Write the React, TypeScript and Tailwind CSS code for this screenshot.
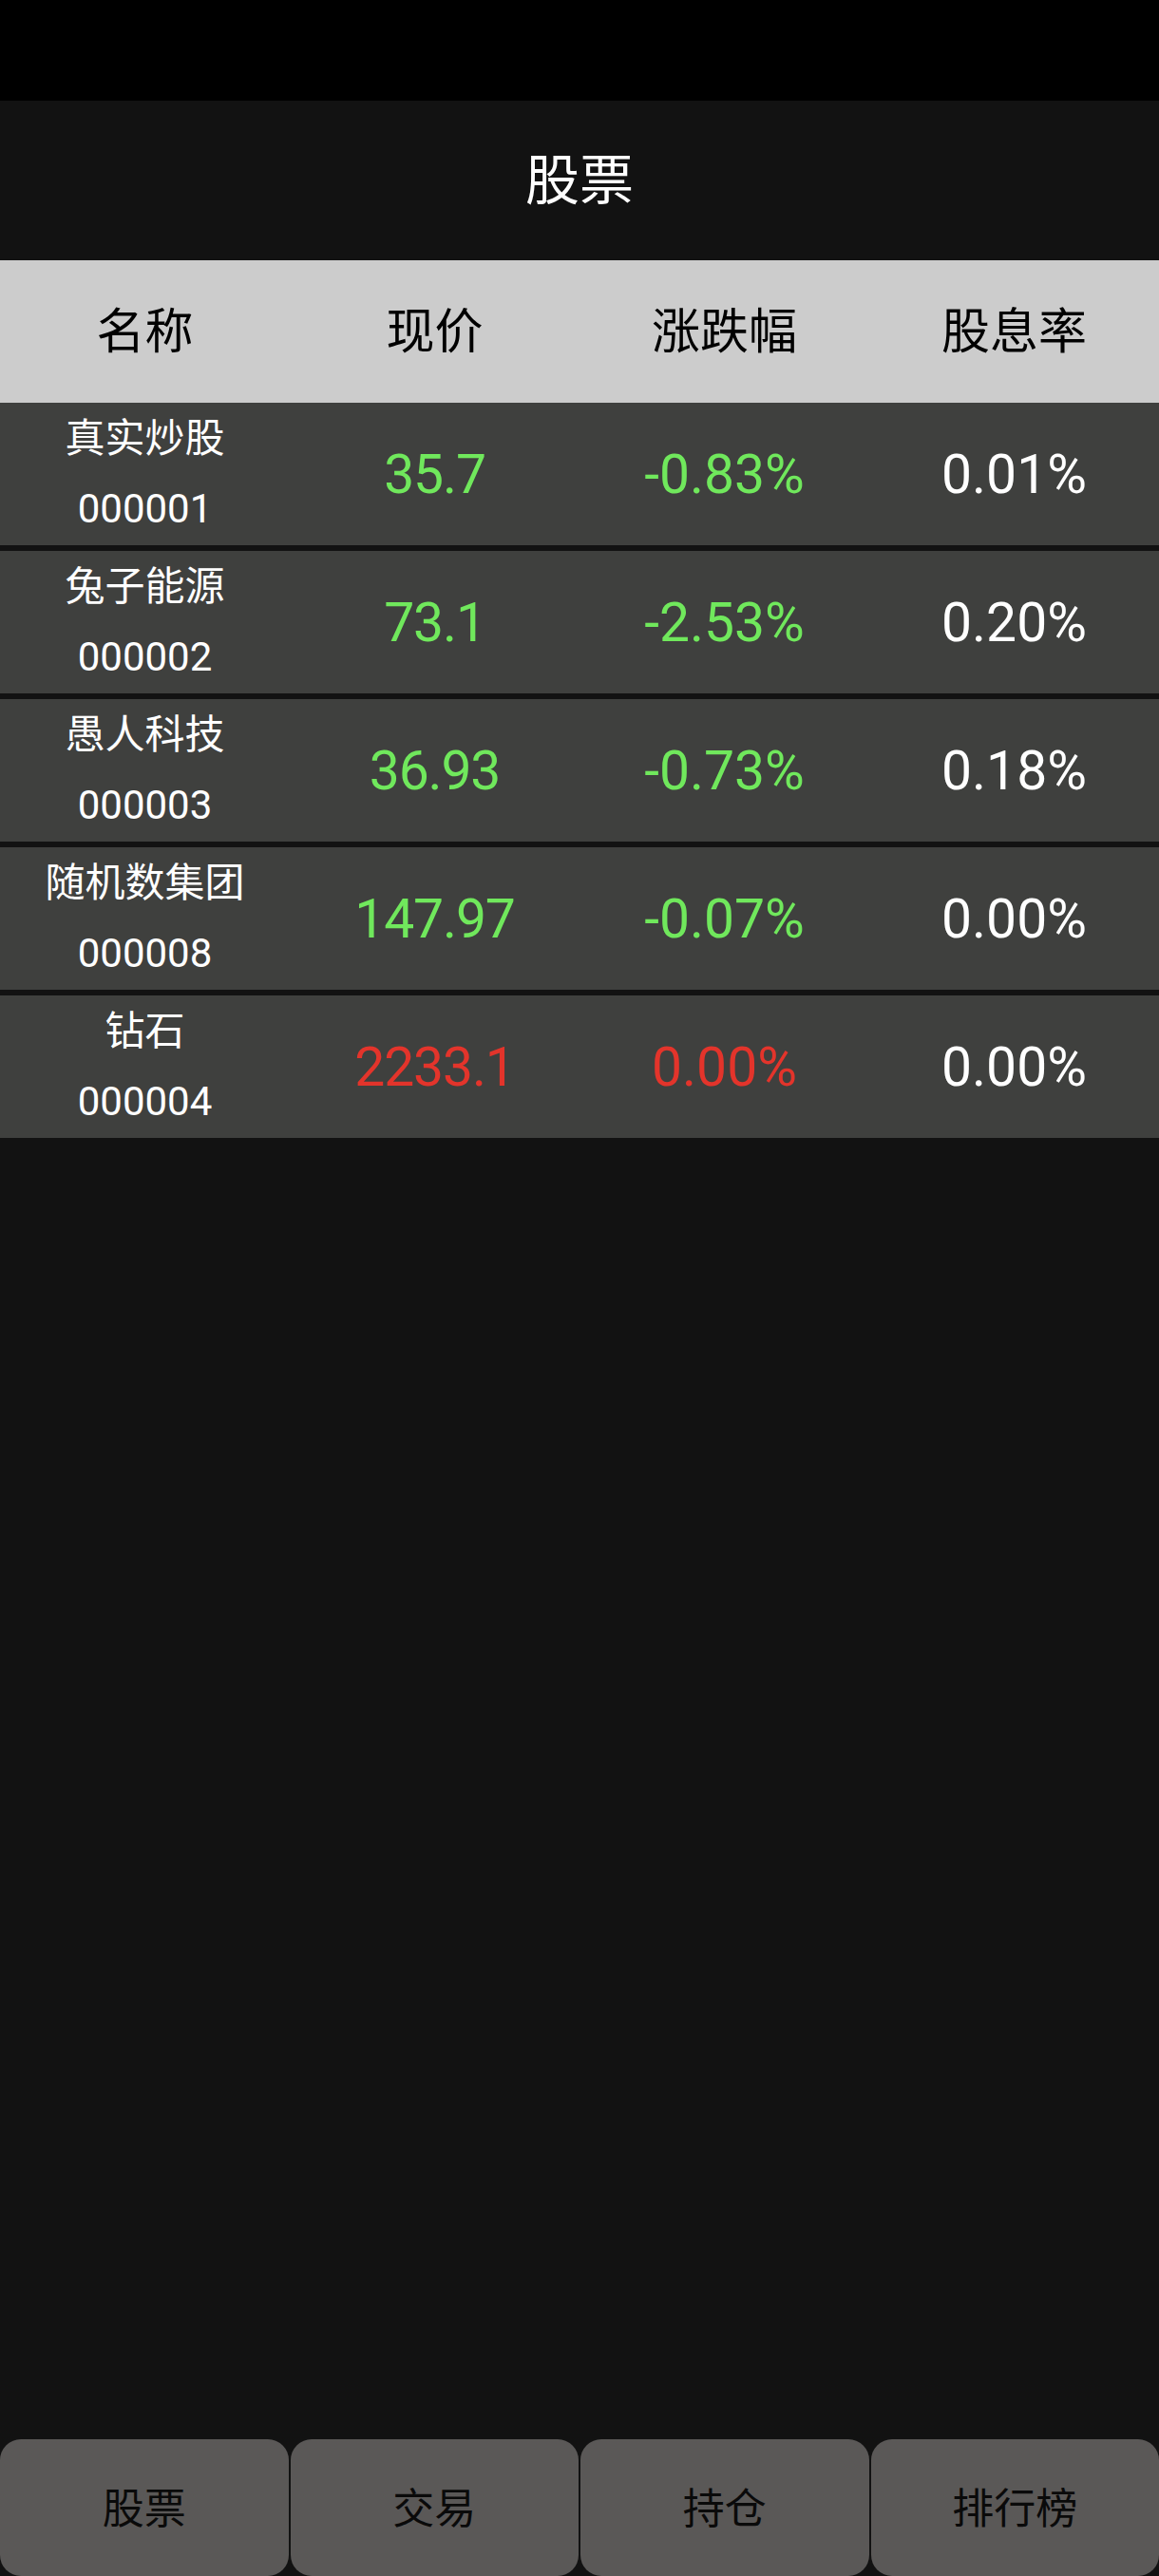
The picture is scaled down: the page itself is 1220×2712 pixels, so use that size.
import React from "react";

type Stock = {
  name: string;
  code: string;
  price: string;
  change: string;
  rate: string;
  up: boolean;
};

const stocks: Stock[] = [
  { name: "真实炒股", code: "000001", price: "35.7", change: "-0.83%", rate: "0.01%", up: false },
  { name: "兔子能源", code: "000002", price: "73.1", change: "-2.53%", rate: "0.20%", up: false },
  { name: "愚人科技", code: "000003", price: "36.93", change: "-0.73%", rate: "0.18%", up: false },
  { name: "随机数集团", code: "000008", price: "147.97", change: "-0.07%", rate: "0.00%", up: false },
  { name: "钻石", code: "000004", price: "2233.1", change: "0.00%", rate: "0.00%", up: true },
];

const tabs = ["股票", "交易", "持仓", "排行榜"];

export default function App() {
  return (
    <div className="flex h-[2712px] w-[1220px] flex-col bg-[#121212] font-['Roboto','Noto_Sans_CJK_SC',sans-serif]">
      <div className="h-[106px] shrink-0 bg-black" />
      <div className="flex h-[168px] shrink-0 items-center justify-center bg-[#121212]">
        <span className="text-[57px] leading-none text-white">股票</span>
      </div>
      <div className="grid h-[150px] shrink-0 grid-cols-4 items-center bg-[#cccccc] pt-[1px] text-center text-[51px] leading-none text-black">
        <div>名称</div>
        <div>现价</div>
        <div>涨跌幅</div>
        <div>股息率</div>
      </div>
      <div className="flex shrink-0 flex-col gap-[6px]">
        {stocks.map((s) => {
          const color = s.up ? "text-[#e3342b]" : "text-[#70e85c]";
          return (
            <div
              key={s.code}
              className="grid h-[150px] grid-cols-4 items-center bg-[#3f403e] text-center"
            >
              <div className="flex flex-col items-center text-[42px] leading-[74px] text-white">
                <span>{s.name}</span>
                <span>{s.code}</span>
              </div>
              <div className={`text-[57px] leading-none tracking-[-0.02em] ${color}`}>{s.price}</div>
              <div className={`text-[57px] leading-none ${color}`}>{s.change}</div>
              <div className="text-[57px] leading-none text-white">{s.rate}</div>
            </div>
          );
        })}
      </div>
      <div className="flex-1" />
      <div className="grid h-[144px] shrink-0 grid-cols-4 gap-[2px]">
        {tabs.map((t) => (
          <div
            key={t}
            className="flex items-center justify-center rounded-[22px] bg-[#5a5857] pt-[4px] text-[44px] leading-none text-[#0a0a0a]"
          >
            {t}
          </div>
        ))}
      </div>
    </div>
  );
}
